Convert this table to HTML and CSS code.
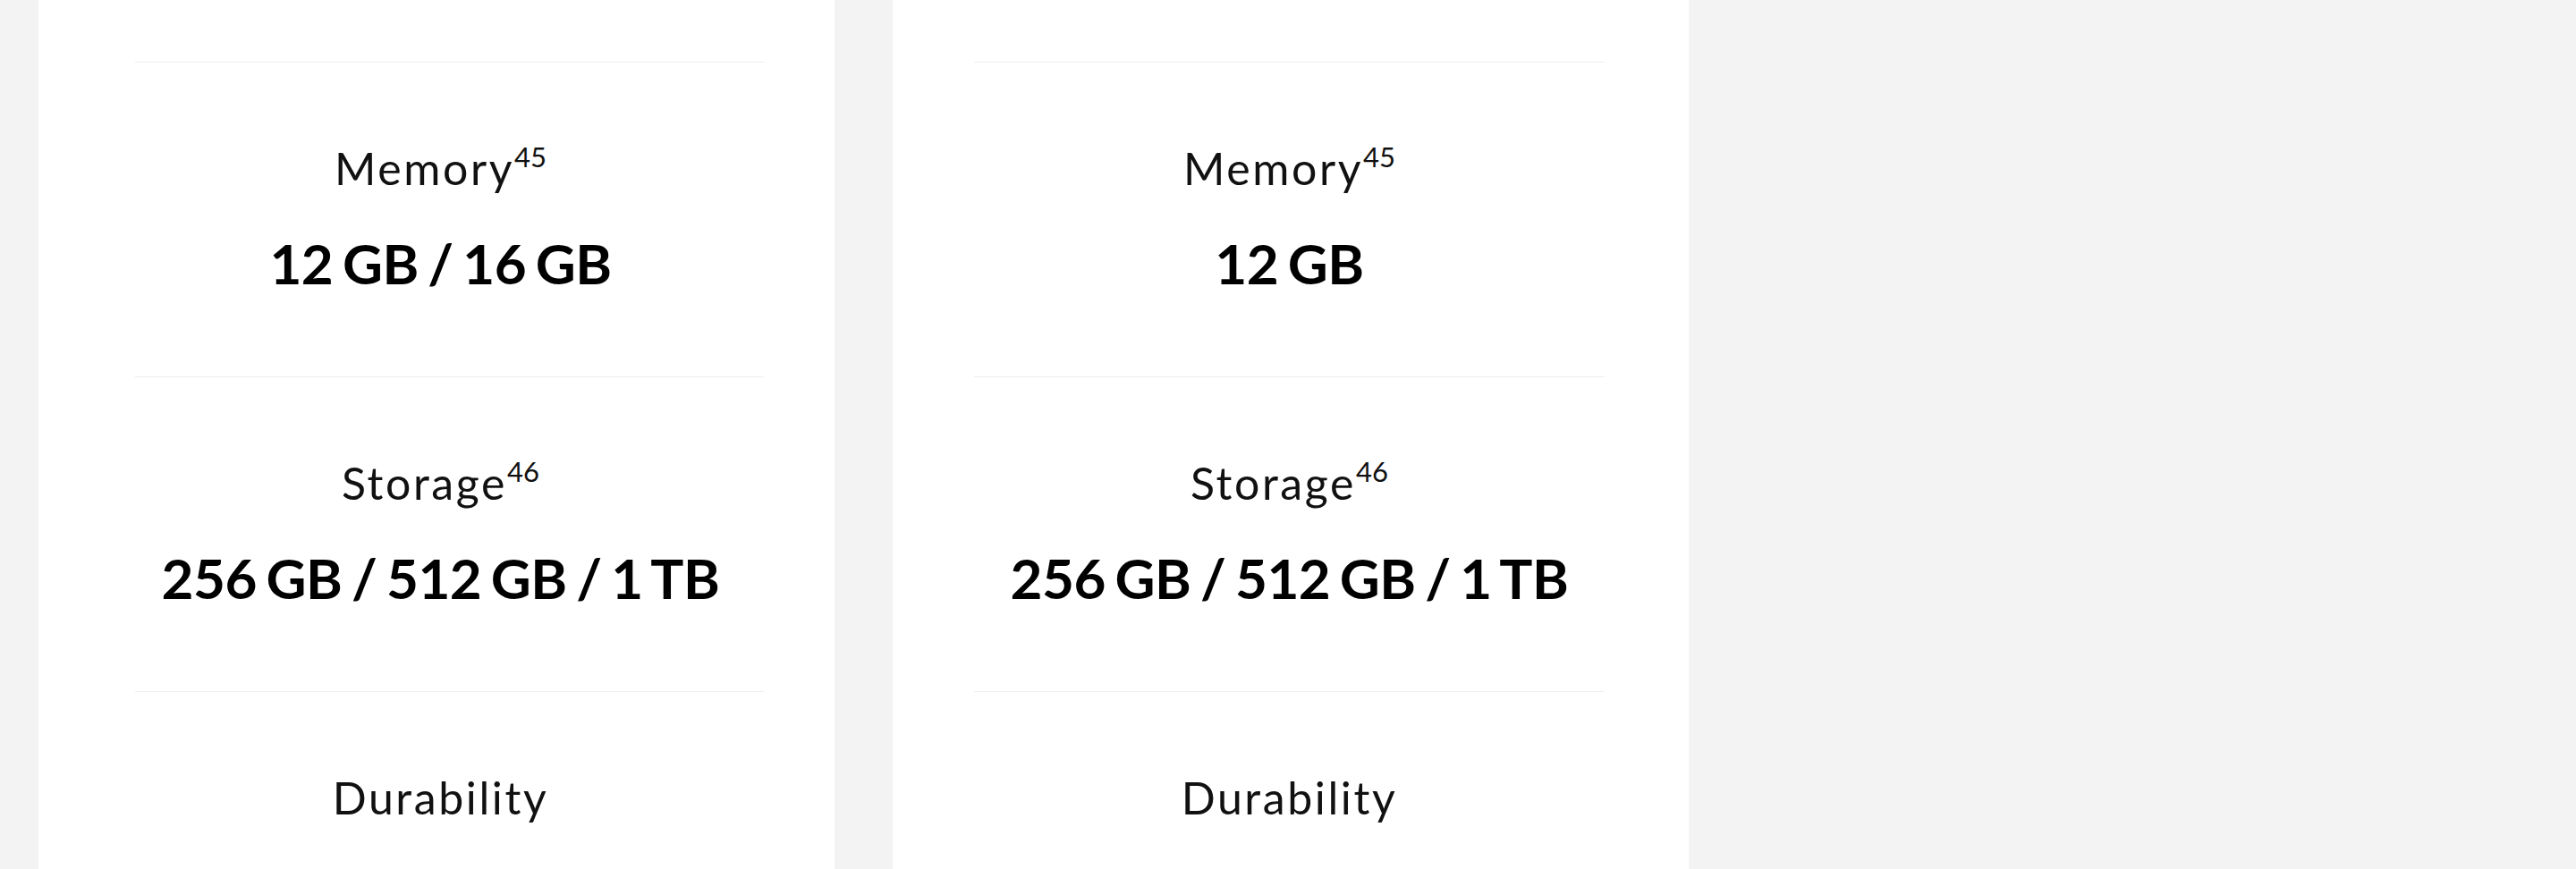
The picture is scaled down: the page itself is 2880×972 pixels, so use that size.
FILE: index.html
```html
<!DOCTYPE html>
<html>
<head>
<meta charset="UTF-8">
<title>Compare specs</title>
<link rel="stylesheet" href="styles.css">
</head>
<body>
<div class="compare">
  <div class="card left">
    <div class="spec">
      <div class="label">Memory<sup>45</sup></div>
      <div class="value">12 GB / 16 GB</div>
    </div>
    <div class="spec">
      <div class="label">Storage<sup>46</sup></div>
      <div class="value">256 GB / 512 GB / 1 TB</div>
    </div>
    <div class="spec">
      <div class="label">Durability</div>
    </div>
  </div>
  <div class="card right">
    <div class="spec">
      <div class="label">Memory<sup>45</sup></div>
      <div class="value">12 GB</div>
    </div>
    <div class="spec">
      <div class="label">Storage<sup>46</sup></div>
      <div class="value">256 GB / 512 GB / 1 TB</div>
    </div>
    <div class="spec">
      <div class="label">Durability</div>
    </div>
  </div>
</div>
</body>
</html>
```
FILE: styles.css
```css
html, body { margin:0; height:100%; overflow:hidden; }
body { background:#f3f3f3; font-family:Lato,'Open Sans',sans-serif; color:#000; }
.compare { display:flex; gap:65px; padding-left:43px; height:972px; }
.card { width:890px; background:#fff; padding-top:69px; box-sizing:border-box; }
.card.left { padding-left:108px; padding-right:79px; }
.card.right { padding-left:91px; padding-right:94px; }
.spec { border-top:1px solid #eeeeee; height:352px; box-sizing:border-box; text-align:center; padding-top:88px; }
.label { font-size:50px; font-weight:400; line-height:60px; color:#111; letter-spacing:2.6px; }
.label sup { font-size:31px; vertical-align:top; line-height:30px; position:relative; top:2px; letter-spacing:0; }
.value { font-size:62px; font-weight:700; line-height:70px; margin-top:41px; letter-spacing:-0.5px; word-spacing:-4px; }
.card.left .label, .card.left .value { margin-left:-20px; }
```
